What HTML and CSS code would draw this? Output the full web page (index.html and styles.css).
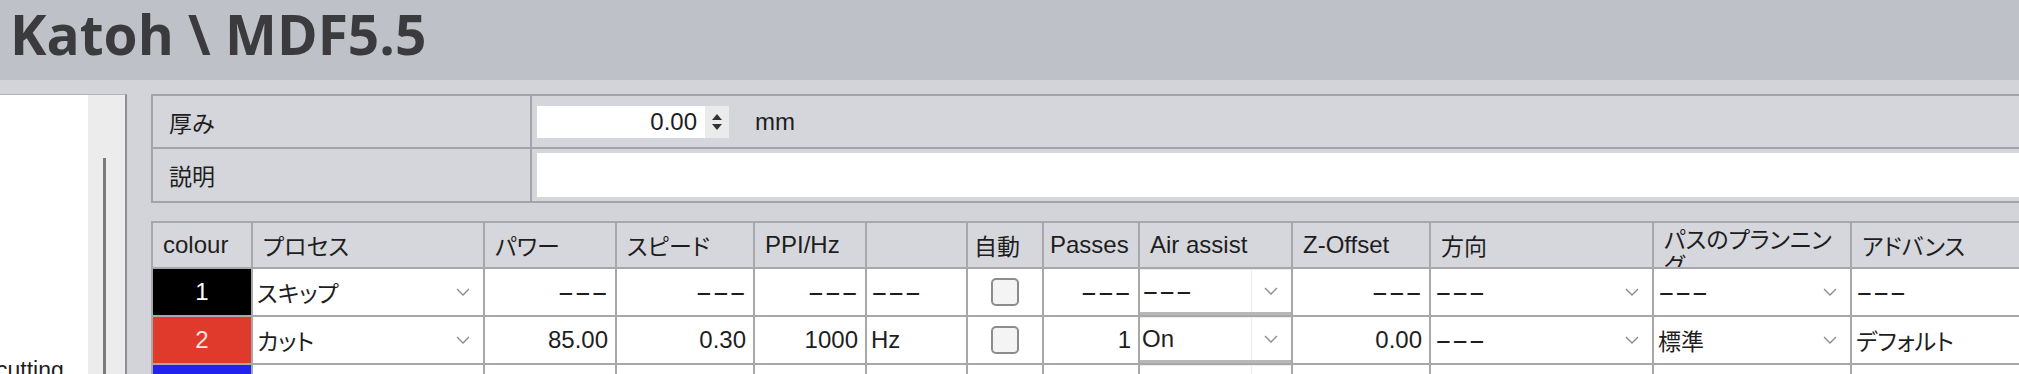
FILE: index.html
```html
<!DOCTYPE html>
<html lang="ja">
<head>
    <meta charset="UTF-8">
    <title>Katoh \ MDF5.5</title>
    <link rel="stylesheet" href="styles.css">
</head>
<body>
    <div class="titlebar">Katoh \ MDF5.5</div>

    <div class="main">
        <aside class="sidebar">
            <div class="tree">
                <div class="tree-item">cutting</div>
            </div>
            <div class="track"><div class="thumb"></div></div>
        </aside>

        <section class="content">
            <div class="props">
                <div class="prop-label jp">厚み</div>
                <div class="prop-value">
                    <div class="spin">
                        <span class="spin-val">0.00</span>
                        <span class="spin-btn"><i class="up"></i><i class="down"></i></span>
                    </div>
                    <span class="unit">mm</span>
                </div>
                <div class="prop-label jp">説明</div>
                <div class="prop-value"><div class="textbox"></div></div>
            </div>

            <div class="grid">
                <!-- header -->
                <div class="hd">colour</div>
                <div class="hd jp">プロセス</div>
                <div class="hd jp">パワー</div>
                <div class="hd jp">スピード</div>
                <div class="hd">PPI/Hz</div>
                <div class="hd"></div>
                <div class="hd hd-tight jp">自動</div>
                <div class="hd hd-tight">Passes</div>
                <div class="hd">Air assist</div>
                <div class="hd">Z-Offset</div>
                <div class="hd jp">方向</div>
                <div class="hd hd-wrap jp">パスのプランニン<br>グ</div>
                <div class="hd jp">アドバンス</div>

                <!-- row 1 -->
                <div class="swatch black">1</div>
                <div class="cell drop"><span class="jp">スキップ</span><svg class="chev" viewBox="0 0 14 8"><polyline points="1,1 7,7 13,1"/></svg></div>
                <div class="cell num"><span class="dash r">---</span></div>
                <div class="cell num"><span class="dash r">---</span></div>
                <div class="cell num"><span class="dash r">---</span></div>
                <div class="cell"><span class="dash">---</span></div>
                <div class="cell center"><span class="check"></span></div>
                <div class="cell num"><span class="dash r">---</span></div>
                <div class="cell drop combo"><span class="dash">---</span><span class="combo-btn"><svg class="chev" viewBox="0 0 14 8"><polyline points="1,1 7,7 13,1"/></svg></span></div>
                <div class="cell num"><span class="dash r">---</span></div>
                <div class="cell drop"><span class="dash">---</span><svg class="chev" viewBox="0 0 14 8"><polyline points="1,1 7,7 13,1"/></svg></div>
                <div class="cell drop"><span class="dash">---</span><svg class="chev" viewBox="0 0 14 8"><polyline points="1,1 7,7 13,1"/></svg></div>
                <div class="cell"><span class="dash">---</span></div>

                <!-- row 2 -->
                <div class="swatch red">2</div>
                <div class="cell drop"><span class="jp">カット</span><svg class="chev" viewBox="0 0 14 8"><polyline points="1,1 7,7 13,1"/></svg></div>
                <div class="cell num">85.00</div>
                <div class="cell num">0.30</div>
                <div class="cell num">1000</div>
                <div class="cell">Hz</div>
                <div class="cell center"><span class="check"></span></div>
                <div class="cell num">1</div>
                <div class="cell drop combo"><span>On</span><span class="combo-btn"><svg class="chev" viewBox="0 0 14 8"><polyline points="1,1 7,7 13,1"/></svg></span></div>
                <div class="cell num">0.00</div>
                <div class="cell drop"><span class="dash">---</span><svg class="chev" viewBox="0 0 14 8"><polyline points="1,1 7,7 13,1"/></svg></div>
                <div class="cell drop"><span class="jp">標準</span><svg class="chev" viewBox="0 0 14 8"><polyline points="1,1 7,7 13,1"/></svg></div>
                <div class="cell jp">デフォルト</div>

                <!-- row 3 -->
                <div class="swatch blue">3</div>
                <div class="cell drop"><span class="jp">スキップ</span><svg class="chev" viewBox="0 0 14 8"><polyline points="1,1 7,7 13,1"/></svg></div>
                <div class="cell num"><span class="dash r">---</span></div>
                <div class="cell num"><span class="dash r">---</span></div>
                <div class="cell num"><span class="dash r">---</span></div>
                <div class="cell"><span class="dash">---</span></div>
                <div class="cell center"><span class="check"></span></div>
                <div class="cell num"><span class="dash r">---</span></div>
                <div class="cell drop combo"><span class="dash">---</span><span class="combo-btn"><svg class="chev" viewBox="0 0 14 8"><polyline points="1,1 7,7 13,1"/></svg></span></div>
                <div class="cell num"><span class="dash r">---</span></div>
                <div class="cell drop"><span class="dash">---</span><svg class="chev" viewBox="0 0 14 8"><polyline points="1,1 7,7 13,1"/></svg></div>
                <div class="cell drop"><span class="dash">---</span><svg class="chev" viewBox="0 0 14 8"><polyline points="1,1 7,7 13,1"/></svg></div>
                <div class="cell"><span class="dash">---</span></div>
            </div>
        </section>
    </div>
</body>
</html>
```
FILE: styles.css
```css
body {
    margin: 0;
    width: 2019px;
    height: 374px;
    overflow: hidden;
    background-color: #d3d4d9;
    font-family: "Liberation Sans", "Noto Sans CJK JP", sans-serif;
    font-size: 24px;
    color: #1e1e1e;
}
.jp {
    font-family: "Noto Sans CJK JP", sans-serif;
    font-size: 23px;
    font-feature-settings: "palt";
}

/* title */
.titlebar {
    height: 80px;
    line-height: 68px;
    padding-left: 10px;
    background-color: #bec1c8;
    font-family: "Open Sans", sans-serif;
    font-weight: 700;
    font-size: 55px;
    color: #3b3b3e;
}

.main {
    display: flex;
    gap: 24px;
    padding-top: 14px;
}

/* left tree */
.sidebar {
    display: flex;
    flex: none;
    width: 125px;
    height: 300px;
    background-color: #fff;
    border-top: 1px solid #b4b4b8;
    border-right: 2px solid #8f8f93;
}
.tree {
    flex: 1;
    overflow: hidden;
}
.tree-item {
    padding-top: 262px;
    font-size: 23px;
    text-indent: -4px;
    white-space: nowrap;
}
.track {
    width: 37px;
    background-color: #ececec;
}
.thumb {
    margin: 63px 0 0 15px;
    width: 3px;
    height: 240px;
    background-color: #7b7b7b;
}

.content {
    flex: none;
    width: 1900px;
}

/* property frame */
.props {
    display: grid;
    grid-template-columns: 377px 1fr;
    grid-template-rows: 51px 52px;
    gap: 2px;
    background-color: #a4a4a8;
    border: 2px solid #a4a4a8;
    border-right: none;
}
.prop-label {
    display: flex;
    align-items: center;
    padding-left: 16px;
    background-color: #d5d6db;
}
.prop-value {
    display: flex;
    align-items: center;
    padding-left: 5px;
    background-color: #d5d6db;
}
.spin {
    display: flex;
    width: 192px;
    height: 32px;
    background-color: #fff;
}
.spin-val {
    flex: 1;
    text-align: right;
    padding-right: 8px;
    line-height: 32px;
}
.spin-btn {
    width: 24px;
    display: flex;
    flex-direction: column;
    align-items: center;
    justify-content: center;
    gap: 4px;
    background-color: #ebebeb;
}
.spin-btn .up {
    border: 5px solid transparent;
    border-top: none;
    border-bottom: 6px solid #333;
}
.spin-btn .down {
    border: 5px solid transparent;
    border-bottom: none;
    border-top: 6px solid #333;
}
.unit {
    margin-left: 26px;
}
.textbox {
    flex: 1;
    height: 44px;
    background-color: #fff;
}

/* laser table */
.grid {
    margin-top: 18px;
    display: grid;
    grid-template-columns: 98px 230px 130px 136px 110px 99px 74px 94px 151px 136px 221px 196px 198px;
    grid-template-rows: 44px 46px 46px 46px;
    gap: 2px;
    width: max-content;
    background-color: #a8a8ac;
    border: 2px solid #a8a8ac;
    border-right: none;
}
.hd {
    display: flex;
    align-items: center;
    padding-left: 10px;
    white-space: nowrap;
    overflow: hidden;
    background-color: #d6d7dc;
}
.hd-tight {
    padding-left: 6px;
}
.hd-wrap {
    align-items: flex-start;
    padding-top: 2px;
    line-height: 26px;
}
.cell {
    display: flex;
    align-items: center;
    padding: 0 4px;
    white-space: nowrap;
    overflow: hidden;
    background-color: #fff;
}
.num {
    justify-content: flex-end;
    padding-right: 7px;
}
.center {
    justify-content: center;
}
.drop {
    justify-content: space-between;
    padding-right: 13px;
}
.combo {
    padding: 0 0 0 2px;
    border-top: 1px solid #ececec;
    border-bottom: 3px solid #b8b8bb;
}
.combo-btn {
    display: flex;
    align-items: center;
    height: 100%;
    padding: 0 13px 0 12px;
    border-left: 1px solid #ececec;
}
.chev {
    width: 14px;
    height: 8px;
    fill: none;
    stroke: #8a8a8a;
    stroke-width: 1.3;
}
.dash {
    display: inline-block;
    transform: scaleX(2.1);
    transform-origin: left center;
}
.dash.r {
    transform-origin: right center;
}
.check {
    width: 24px;
    height: 24px;
    border: 2px solid #8c8c8c;
    border-radius: 5px;
    background-color: #f4f4f4;
}
.swatch {
    display: flex;
    align-items: center;
    justify-content: center;
    color: #fff;
}
.black {
    background-color: #000;
}
.red {
    background-color: #df3a2b;
    color: #fde4dc;
}
.blue {
    background-color: #2222ee;
}
```
